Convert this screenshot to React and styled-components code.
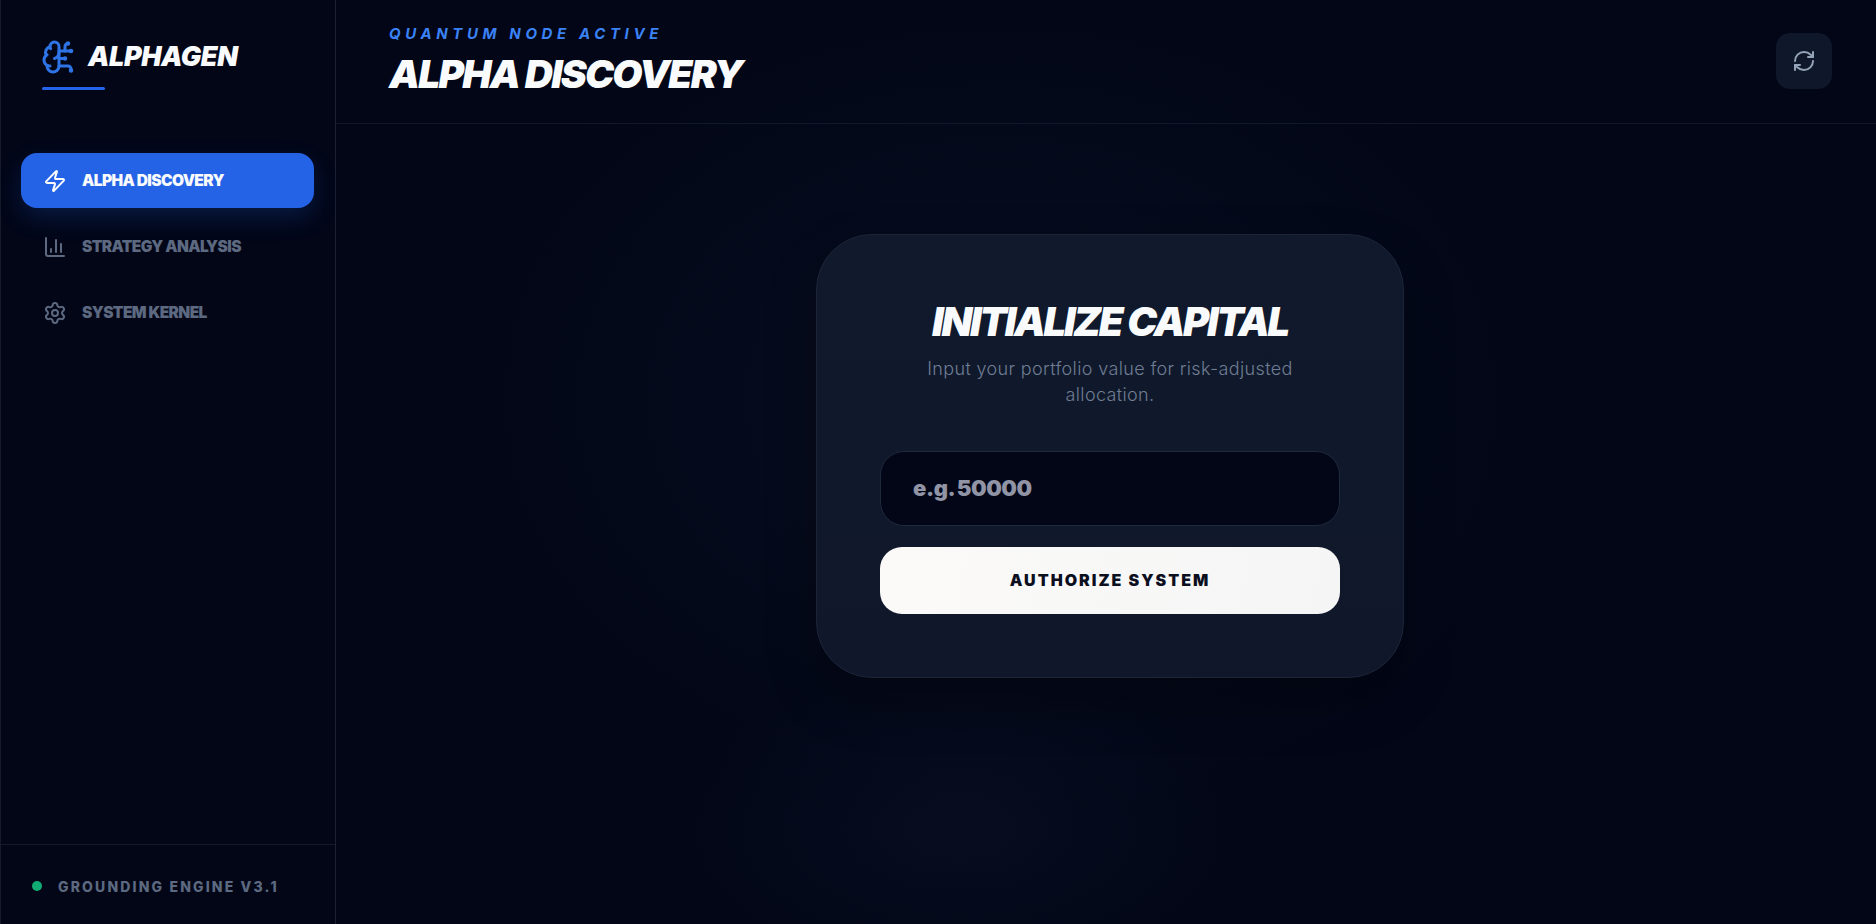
import React from "react";
import styled, { createGlobalStyle } from "styled-components";
import { BrainCircuit, Zap, ChartColumn, Settings, RefreshCw } from "lucide-react";

const Global = createGlobalStyle`
  html, body { margin: 0; padding: 0; height: 100%; background: #020617; }
  #root { height: 100%; }
  * { box-sizing: border-box; }
`;

const Shell = styled.div`
  display: flex;
  width: 1876px;
  height: 924px;
  overflow: hidden;
  font-family: Inter, "Liberation Sans", sans-serif;
  color: #f8fafc;
  background:
    radial-gradient(ellipse 300px 160px at 960px 830px, rgba(15, 23, 42, 0.4), transparent),
    radial-gradient(ellipse 560px 420px at 1000px 400px, rgba(15, 23, 42, 0.45), transparent),
    #020617;
`;

const Sidebar = styled.aside`
  width: 336px;
  flex: none;
  display: flex;
  flex-direction: column;
  border-left: 1px solid #161b2b;
  border-right: 1px solid #1a2133;
`;

const Brand = styled.div`
  height: 153px;
  padding: 40px 0 0 40px;
  flex: none;
`;

const BrandRow = styled.div`
  display: flex;
  align-items: center;
  gap: 11px;
  height: 33px;
  color: #2f74e6;
`;

const BrandName = styled.div`
  font-size: 27px;
  font-weight: 900;
  font-style: italic;
  letter-spacing: -0.4px;
  color: #f8fafc;
`;

const BrandRule = styled.div`
  width: 63px;
  height: 3px;
  margin: 14px 0 0 1px;
  background: #2563eb;
  border-radius: 2px;
`;

const Nav = styled.nav`
  flex: 1;
  display: flex;
  flex-direction: column;
  gap: 11px;
  padding: 0 21px 0 20px;
`;

const NavItem = styled.div`
  display: flex;
  align-items: center;
  gap: 15px;
  height: 55px;
  padding-left: 22px;
  border-radius: 16px;
  font-size: 15.5px;
  font-weight: 900;
  letter-spacing: -0.6px;
  color: ${(p) => (p.$active ? "#f8fafc" : "#5c6980")};
  background: ${(p) => (p.$active ? "#2563e6" : "transparent")};
  box-shadow: ${(p) => (p.$active ? "0 10px 24px rgba(37, 99, 235, 0.2)" : "none")};
`;

const Status = styled.div`
  height: 80px;
  flex: none;
  display: flex;
  align-items: center;
  gap: 16px;
  padding: 3px 0 0 31px;
  border-top: 1px solid #141a2a;
`;

const Dot = styled.span`
  width: 10px;
  height: 10px;
  border-radius: 50%;
  background: #10ac74;
`;

const StatusText = styled.span`
  font-size: 14px;
  font-weight: 800;
  letter-spacing: 2.15px;
  color: #5c6980;
`;

const Main = styled.main`
  flex: 1;
  display: flex;
  flex-direction: column;
  min-width: 0;
`;

const Header = styled.header`
  height: 124px;
  flex: none;
  display: flex;
  align-items: center;
  justify-content: space-between;
  padding: 0 44px 0 53px;
  border-bottom: 1px solid #121829;
`;

const Eyebrow = styled.div`
  font-size: 15px;
  line-height: 18px;
  margin-top: -1px;
  font-weight: 700;
  font-style: italic;
  letter-spacing: 4.62px;
  color: #3b82f6;
`;

const Title = styled.h1`
  margin: 8px 0 0;
  font-size: 39px;
  line-height: 46px;
  font-weight: 900;
  font-style: italic;
  letter-spacing: -1.8px;
  color: #f8fafc;
`;

const IconButton = styled.button`
  width: 56px;
  height: 56px;
  display: flex;
  align-items: center;
  justify-content: center;
  padding: 0;
  margin-top: -2px;
  border: none;
  border-radius: 14px;
  color: #94a3b8;
  background: #0f172a;
`;

const Stage = styled.div`
  flex: 1;
  display: flex;
  justify-content: center;
  padding: 110px 0 0 8px;
`;

const Card = styled.section`
  width: 588px;
  height: 444px;
  display: flex;
  flex-direction: column;
  align-items: center;
  padding: 64px 64px 0;
  border: 1px solid #1c2538;
  border-radius: 56px;
  background: #0f172a;
  background-image: linear-gradient(180deg, #101a2c, #10172a);
  box-shadow: 0 24px 50px rgba(0, 0, 0, 0.3);
`;

const CardTitle = styled.h2`
  margin: 0;
  font-size: 40px;
  line-height: 46px;
  font-weight: 900;
  font-style: italic;
  letter-spacing: -2.25px;
  white-space: nowrap;
  color: #f8fafc;
`;

const CardText = styled.p`
  margin: 11px 0 0;
  width: 400px;
  text-align: center;
  font-size: 18px;
  line-height: 26px;
  font-weight: 300;
  letter-spacing: 0.36px;
  color: #6f7d93;
`;

const AmountInput = styled.input`
  width: 460px;
  height: 75px;
  margin-top: 43px;
  flex: none;
  padding: 0 32px 2px;
  border: 1px solid #1e293b;
  border-radius: 24px;
  outline: none;
  background: #020617;
  font-family: inherit;
  font-size: 22px;
  font-weight: 900;
  word-spacing: -1.5px;
  letter-spacing: -0.4px;
  color: #f8fafc;
  &::placeholder { color: #9094a5; opacity: 1; }
`;

const Authorize = styled.button`
  width: 460px;
  height: 67px;
  margin-top: 21px;
  padding: 0 0 2px;
  flex: none;
  border: none;
  border-radius: 22px;
  background: linear-gradient(100deg, #fbfaf9, #f5f5f5);
  font-family: inherit;
  font-size: 16px;
  font-weight: 900;
  letter-spacing: 2px;
  color: #0b0f1e;
`;

const navItems = [
  { label: "ALPHA DISCOVERY", Icon: Zap, active: true },
  { label: "STRATEGY ANALYSIS", Icon: ChartColumn },
  { label: "SYSTEM KERNEL", Icon: Settings },
];

export default function App() {
  return (
    <Shell>
      <Global />
      <Sidebar>
        <Brand>
          <BrandRow>
            <BrainCircuit size={36} strokeWidth={2} />
            <BrandName>ALPHAGEN</BrandName>
          </BrandRow>
          <BrandRule />
        </Brand>
        <Nav>
          {navItems.map(({ label, Icon, active }) => (
            <NavItem key={label} $active={active}>
              <Icon size={24} strokeWidth={2} />
              {label}
            </NavItem>
          ))}
        </Nav>
        <Status>
          <Dot />
          <StatusText>GROUNDING ENGINE V3.1</StatusText>
        </Status>
      </Sidebar>
      <Main>
        <Header>
          <div>
            <Eyebrow>QUANTUM NODE ACTIVE</Eyebrow>
            <Title>ALPHA DISCOVERY</Title>
          </div>
          <IconButton aria-label="Refresh">
            <RefreshCw size={24} strokeWidth={2} />
          </IconButton>
        </Header>
        <Stage>
          <Card>
            <CardTitle>INITIALIZE CAPITAL</CardTitle>
            <CardText>Input your portfolio value for risk-adjusted allocation.</CardText>
            <AmountInput placeholder="e.g. 50000" />
            <Authorize>AUTHORIZE SYSTEM</Authorize>
          </Card>
        </Stage>
      </Main>
    </Shell>
  );
}
